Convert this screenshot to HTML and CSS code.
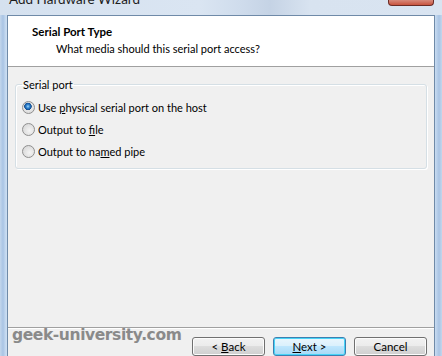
FILE: index.html
```html
<!DOCTYPE html>
<html>
  <head>
    <meta charset="utf-8" />
    <title>Add Hardware Wizard</title>
    <link rel="stylesheet" href="styles.css">
  </head>
  <body>
    <div class="window">
      <div class="titlebar">
        <span class="title">Add Hardware Wizard</span>
        <span class="close"></span>
      </div>
      <div class="client">
        <div class="header">
          <div class="heading">Serial Port Type</div>
          <div class="subheading">What media should this serial port access?</div>
        </div>
        <div class="content">
          <fieldset class="group">
            <legend>Serial port</legend>
            <label class="option"><input type="radio" name="media" checked /><span>Use <u>p</u>hysical serial port on the host</span></label>
            <label class="option"><input type="radio" name="media" /><span>Output to <u>f</u>ile</span></label>
            <label class="option"><input type="radio" name="media" /><span>Output to na<u>m</u>ed pipe</span></label>
          </fieldset>
        </div>
        <div class="footer">
          <span class="watermark">geek-university.com</span>
          <button>&lt; <u>B</u>ack</button>
          <button class="default"><u>N</u>ext &gt;</button>
          <button>Cancel</button>
        </div>
      </div>
    </div>
  </body>
</html>
```

FILE: styles.css
```css
body {
  margin: 0;
  width: 442px;
  height: 356px;
  overflow: hidden;
  font-family: "Segoe UI", Lato, "Noto Sans", sans-serif;
  font-size: 11px;
  color: #000;
}

.window {
  height: 356px;
  padding: 0 7px 0 7px;
  box-sizing: border-box;
  background: linear-gradient(90deg, #c3d6ec 0, #a9c4e4 3px, #c9dcf1 6px, #c9dcf1 435px, #a9c4e4 439px, #c3d6ec 442px);
  display: flex;
  flex-direction: column;
}

.titlebar {
  flex: none;
  height: 15px;
  margin: 0 -7px;
  padding: 0 8px 0 9px;
  display: flex;
  justify-content: space-between;
  background: linear-gradient(90deg, #d5e1ef 0, #dae5f2 200px, #cfdcec 240px, #c5d3e5 270px, #d8e3f0 310px, #d9e4f1 442px);
}

.title {
  margin-top: -9px;
  font-size: 13.5px;
  line-height: 17px;
  color: #1e1e1e;
}

.close {
  width: 44px;
  height: 5px;
  border: 1px solid #6b2b25;
  border-top: none;
  border-radius: 0 0 4px 4px;
  background: linear-gradient(#d78a7c, #c8543f);
}

.client {
  flex: 1;
  min-height: 0;
  display: flex;
  flex-direction: column;
  border-left: 1px solid #6f8aa8;
  border-top: 1px solid #6f8aa8;
  border-right: 1px solid #6f8aa8;
  background: #f0f0f0;
}

.header {
  flex: none;
  height: 51px;
  padding: 8px 0 0 24px;
  box-sizing: border-box;
  background: #fff;
  border-bottom: 1px solid #a0a0a0;
  line-height: 15px;
}

.heading {
  font-weight: bold;
  font-size: 11.5px;
}

.subheading {
  padding: 2px 0 0 24px;
}

.content {
  flex: 1;
  min-height: 0;
  padding: 10px 7px 0;
  border-bottom: 1px solid #a0a0a0;
}

.group {
  margin: 0;
  padding: 4px 6px 6px;
  border: 1px solid #d5dfe5;
  border-radius: 3px;
  box-shadow: inset 1px 1px #fff, 1px 1px #fff;
}

.group legend {
  padding: 0 1px;
  line-height: 15px;
}

.option {
  display: flex;
  align-items: center;
  gap: 3px;
  height: 22px;
}

.option input {
  appearance: none;
  margin: 0;
  width: 13px;
  height: 13px;
  border: 1px solid #8f8f8f;
  border-radius: 50%;
  background: radial-gradient(circle at 60% 60%, #f4f4f4 0, #dcdcdc 70%, #cfcfcf 100%);
  box-sizing: border-box;
}

.option input:checked {
  background: radial-gradient(circle at 45% 40%, #a8d8f8 0, #3d8fd6 1.5px, #135aa8 3px, #1c4e86 3.5px, #e6e6e6 4px, #d4d4d4 100%);
}

.footer {
  flex: none;
  position: relative;
  display: flex;
  justify-content: flex-end;
  gap: 8px;
  height: 28px;
  box-sizing: border-box;
  padding: 8px 7px 0;
  border-top: 1px solid #fff;
}

.footer button {
  flex: none;
  width: 73px;
  height: 19px;
  padding: 0;
  font: inherit;
  font-size: 11.5px;
  line-height: 17px;
  color: #000;
  border: 1px solid #707070;
  border-radius: 3px;
  background: linear-gradient(#f2f2f2 0, #ebebeb 50%, #dddddd 50%, #cfcfcf 100%);
  box-shadow: inset 0 0 0 1px #fcfcfc;
}

.footer button.default {
  border-color: #3c7fb1;
  background: linear-gradient(#eaf6fd 0, #d9f0fc 50%, #bee6fd 50%, #a7d9f5 100%);
  box-shadow: inset 0 0 0 1px #48d4f7;
}

.watermark {
  position: absolute;
  left: 4px;
  top: -3px;
  font-family: "DejaVu Sans", sans-serif;
  font-weight: bold;
  font-size: 15.5px;
  color: #8a8a8a;
  letter-spacing: -0.4px;
}
```
